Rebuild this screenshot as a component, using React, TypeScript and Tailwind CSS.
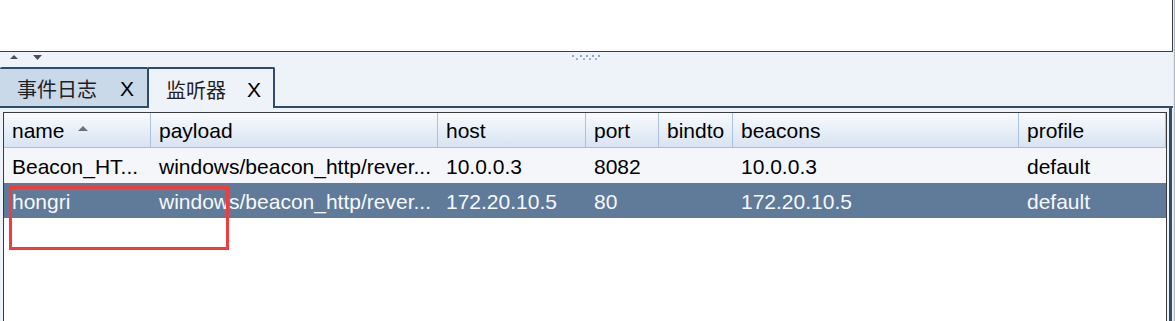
const rows = [
  {
    name: "Beacon_HT...",
    payload: "windows/beacon_http/rever...",
    host: "10.0.0.3",
    port: "8082",
    bindto: "",
    beacons: "10.0.0.3",
    profile: "default",
    selected: false,
  },
  {
    name: "hongri",
    payload: "windows/beacon_http/rever...",
    host: "172.20.10.5",
    port: "80",
    bindto: "",
    beacons: "172.20.10.5",
    profile: "default",
    selected: true,
  },
];

const headers = ["name", "payload", "host", "port", "bindto", "beacons", "profile"];

const SortArrow = () => (
  <svg width="12" height="6" viewBox="0 0 12 6" className="ml-[12px] mb-[4px]">
    <polygon points="6,0 11,5 1,5" fill="#6b6f76" />
  </svg>
);

const Grip = () => (
  <svg width="30" height="6" viewBox="0 0 30 6">
    {[0, 8, 14, 20, 26].map((x) => (
      <rect key={"t" + x} x={x} y="0" width="2" height="2" fill="#8da3c0" />
    ))}
    {[4, 11, 17, 23].map((x) => (
      <rect key={"b" + x} x={x} y="3" width="2" height="2" fill="#9fb2cb" />
    ))}
  </svg>
);

const Divider = () => (
  <div className="grid h-[15px] grid-cols-[1fr_auto_1fr] items-start pt-[3px]">
    <div className="flex items-center gap-[15px] pl-[10px]">
      <svg width="8" height="5" viewBox="0 0 8 5">
        <polygon points="4,0 8,4 0,4" fill="#4a4e56" />
      </svg>
      <svg width="9" height="5" viewBox="0 0 9 5">
        <polygon points="0,0 9,0 4.5,5" fill="#4a4e56" />
      </svg>
    </div>
    <Grip />
    <div />
  </div>
);

const Tabs = () => (
  <div className="flex h-[41px] items-stretch">
    <div className="flex items-center rounded-tl-[2px] border-t-2 border-b-2 border-[#2e4c6b] bg-[#c9d9ea] pl-[17px] pr-[13px] pt-[2px]">
      <span className="w-[83px] font-['Noto_Sans_CJK_SC',sans-serif] text-[20px] leading-none text-[#222]">
        事件日志
      </span>
      <span className="ml-[20px] text-[21px] leading-none text-black">X</span>
    </div>
    <div className="flex w-[128px] items-center rounded-t-[2px] border-x-2 border-t-2 border-[#2e4c6b] bg-[#eef2f9] pl-[17px] pr-[12px] pt-[2px]">
      <span className="w-[62px] font-['Noto_Sans_CJK_SC',sans-serif] text-[20px] leading-none text-[#222]">
        监听器
      </span>
      <span className="ml-[20px] text-[21px] leading-none text-black">X</span>
    </div>
    <div className="flex-1 border-b-2 border-[#2e4c6b]" />
  </div>
);

const gridCols = "grid grid-cols-[147px_287px_148px_73px_74px_286px_147px]";

const ListenerTable = () => (
  <div className="h-full border-x border-t border-[#3c3c3c] bg-white">
    <div className={`${gridCols} h-[35px] border-b border-[#a7bfda] bg-linear-to-b from-[#f8fafd] to-[#d8e4f2]`}>
      {headers.map((h) => (
        <div key={h} className="flex items-center border-r border-[#a9c1dc] pl-[8px] pt-[1px] text-[21px] text-black">
          {h}
          {h === "name" && <SortArrow />}
        </div>
      ))}
    </div>
    {rows.map((r) => (
      <div
        key={r.name}
        className={`${gridCols} h-[35px] ${r.selected ? "bg-[#5f7b99] text-[#f7f9fd]" : "bg-[#f5f6f9] text-black"}`}
      >
        {[r.name, r.payload, r.host, r.port, r.bindto, r.beacons, r.profile].map((v, i) => (
          <div key={i} className="flex items-center overflow-hidden whitespace-nowrap pl-[8px] pt-[3px] text-[21px]">
            {v}
          </div>
        ))}
      </div>
    ))}
  </div>
);

export default function App() {
  return (
    <div className="relative flex h-[321px] w-[1175px] overflow-hidden bg-[#eef2f9] font-['Liberation_Sans',Arial,sans-serif]">
      <div className="flex w-[1173px] flex-col">
        <div className="h-[52px] border-r border-b border-[#3b3f48] bg-white" />
        <Divider />
        <Tabs />
        <div className="mr-[1px] flex-1 border-r-[3px] border-[#2e4c6b] pt-[4px] pl-[3px] pr-[2px]">
          <ListenerTable />
        </div>
      </div>
      <div className="w-[2px] border-r border-[#b4b9c1] bg-[#e3e7ee]" />
      <div className="absolute top-[186px] left-[9px] h-[64px] w-[220px] border-[3px] border-[#f23c3c]" />
    </div>
  );
}
